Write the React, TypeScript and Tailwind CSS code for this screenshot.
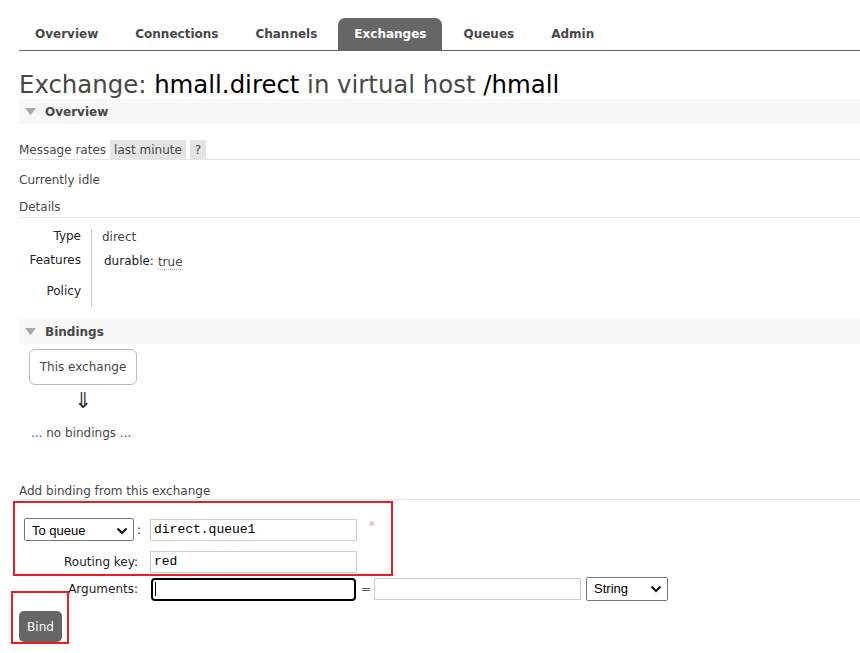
const tabs = ["Overview", "Connections", "Channels", "Exchanges", "Queues", "Admin"];

function SectionHeader({ title }: { title: string }) {
  return (
    <div className="flex h-[25px] items-center bg-[#f7f7f7] pl-[6px]">
      <svg width="11" height="7" viewBox="0 0 11 7" className="mr-[9px]">
        <polygon points="0,0 11,0 5.5,7" fill="#a8a8a8" />
      </svg>
      <span className="font-bold text-[#484848]">{title}</span>
    </div>
  );
}

function Chevron() {
  return (
    <svg width="12" height="8" viewBox="0 0 12 8">
      <polyline points="1.5,1.5 6,6 10.5,1.5" fill="none" stroke="#111" strokeWidth="2" />
    </svg>
  );
}

export default function App() {
  return (
    <div className="relative h-[653px] w-[860px] overflow-hidden bg-white pl-[19px] font-['DejaVu_Sans',Verdana,sans-serif] text-[12px] text-[#484848]">
      {/* tabs */}
      <div className="mt-[18px] flex gap-[5px] border-b border-[#666]">
        {tabs.map((t) => (
          <div
            key={t}
            className={
              t === "Exchanges"
                ? "h-8 rounded-t-[7px] bg-[#666] px-4 text-[12px] leading-8 font-bold text-white"
                : "h-8 px-4 text-[12px] leading-8 font-bold text-[#484848]"
            }
          >
            {t}
          </div>
        ))}
      </div>

      <h1 className="mt-[20px] h-[28px] text-[24.4px] leading-[28px] font-normal text-[#484848]">
        Exchange: <span className="text-black">hmall.direct</span> in virtual host{" "}
        <span className="text-black">/hmall</span>
      </h1>

      <SectionHeader title="Overview" />

      <div className="mt-[16px] flex h-[20px] items-center border-b border-[#e4e4e4]">
        <span>Message rates</span>
        <span className="ml-[4px] flex h-[19px] items-center bg-[#e4e4e4] px-[4px]">last minute</span>
        <span className="ml-[4px] flex h-[19px] items-center bg-[#e4e4e4] px-[5px]">?</span>
      </div>

      <div className="mt-[11px] h-[18px] leading-[18px]">Currently idle</div>
      <div className="mt-[10px] flex h-[19px] items-start border-b border-[#e4e4e4] leading-[16px]">Details</div>

      <div className="mt-[11px] flex">
        <div className="w-[62px] text-right text-[#222]">
          <div className="h-[24px] leading-[14px]">Type</div>
          <div className="h-[31px] leading-[14px]">Features</div>
          <div className="h-[23px] leading-[14px]">Policy</div>
        </div>
        <div className="ml-[10px] w-px bg-[#ccc]" />
        <div className="ml-[10px] pt-[1px]">
          <div className="h-[24px] leading-[14px]">direct</div>
          <div className="flex h-[24px] items-start leading-[14px]">
            <span className="ml-[2px] text-[#222]">durable:</span>
            <span className="ml-[4px] mt-[2px] border-b border-dotted border-[#aaa] leading-[13px]">true</span>
          </div>
        </div>
      </div>

      <div className="mt-[12px]">
        <SectionHeader title="Bindings" />
      </div>

      <div className="ml-[10px] mt-[5px] flex h-[36px] w-[108px] items-center justify-center rounded-[6px] border border-[#bbb]">
        This exchange
      </div>
      <div className="ml-[55px] mt-[6px] h-[20px] text-[22px] leading-[20px] text-[#333]">⇓</div>
      <div className="ml-[12px] mt-[14px] h-[16px] leading-[16px]">... no bindings ...</div>

      <div className="mt-[42px] flex h-[17px] items-start border-b border-[#e4e4e4] leading-[16px]">
        Add binding from this exchange
      </div>

      {/* form */}
      <div className="mt-[18px] grid grid-cols-[124px_1fr] items-center gap-y-[10px] text-[#222]">
        <div className="flex items-center pl-[5px]">
          <div className="flex h-[23px] w-[110px] items-center justify-between rounded-[2px] border border-[#767676] pl-[7px] pr-[5px] pt-[2px] font-['Liberation_Sans',Arial,sans-serif] text-[13px] text-black">
            <span>To queue</span>
            <Chevron />
          </div>
          <span className="ml-[3px]">:</span>
        </div>
        <div className="ml-[7px] flex items-center">
          <div className="flex h-[22px] w-[207px] items-center border border-[#ccc] pl-[3px] font-['Liberation_Mono',monospace] text-[13px] text-black">
            direct.queue1
          </div>
          <span className="ml-[12px] -mt-[6px] text-[11px] text-[#f08a9a]">*</span>
        </div>

        <div className="pr-[5px] text-right">Routing key:</div>
        <div className="ml-[7px] flex h-[22px] w-[207px] items-center border border-[#ccc] pl-[3px] font-['Liberation_Mono',monospace] text-[13px] text-black">
          red
        </div>

        <div className="-mt-[6px] pr-[5px] text-right">Arguments:</div>
        <div className="-mt-[6px] ml-[8px] flex items-center">
          <div className="flex h-[23px] w-[205px] items-center rounded-[4px] border-2 border-black pl-[2px]">
            <div className="h-[14px] w-px bg-black" />
          </div>
          <span className="ml-[5px] text-[#555]">=</span>
          <div className="ml-[3px] h-[22px] w-[207px] border border-[#ccc]" />
          <div className="ml-[5px] flex h-[24px] w-[82px] items-center justify-between rounded-[2px] border border-[#767676] pl-[7px] pr-[5px] font-['Liberation_Sans',Arial,sans-serif] text-[13px] text-black">
            <span>String</span>
            <Chevron />
          </div>
        </div>
      </div>

      <button className="mt-[10px] flex h-[31px] w-[43px] items-center justify-center rounded-[5px] bg-[#666] text-[12px] text-white">
        Bind
      </button>

      {/* annotation boxes */}
      <div className="absolute left-[13px] top-[501px] h-[75px] w-[380px] border-2 border-[#ed1c24]" />
      <div className="absolute left-[11px] top-[591px] h-[53px] w-[58px] border-2 border-[#ed1c24]" />
    </div>
  );
}
